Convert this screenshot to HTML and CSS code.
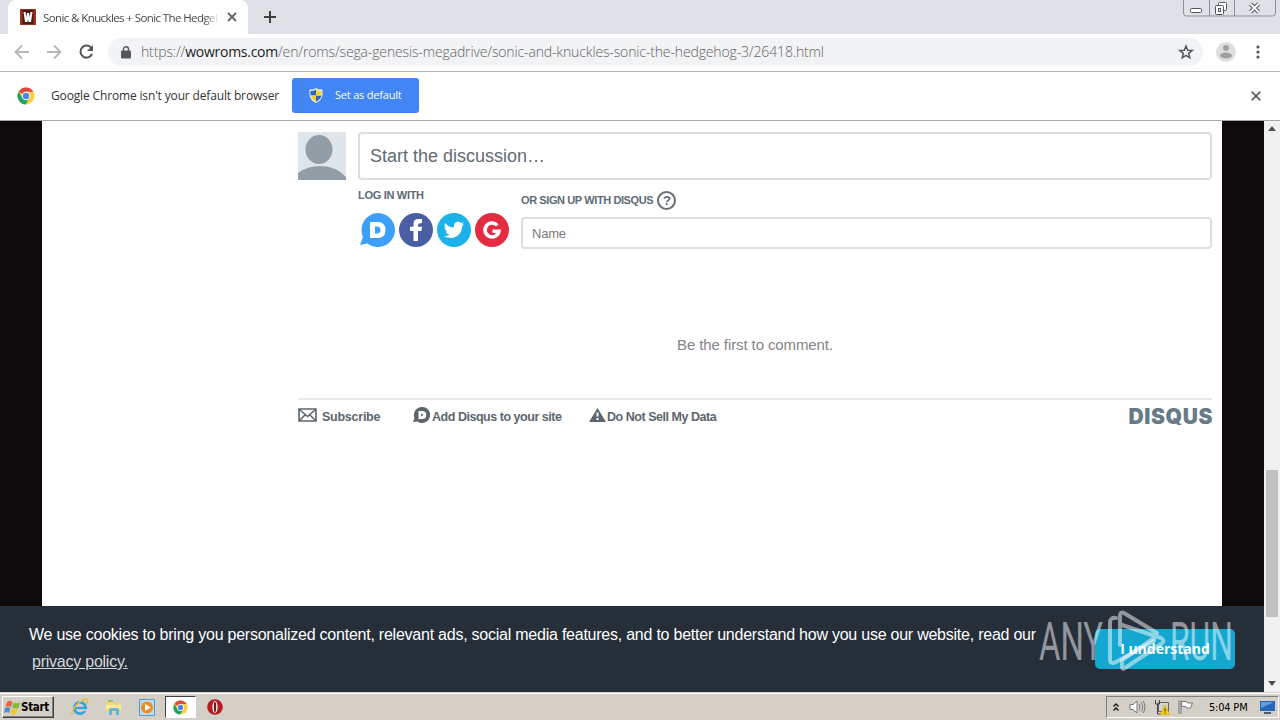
FILE: index.html
```
<!DOCTYPE html>
<html lang="en">
<head>
<meta charset="utf-8">
<title>Sonic &amp; Knuckles + Sonic The Hedgehog 3</title>
<link rel="stylesheet" href="styles.css">
</head>
<body>
<!-- shared symbols -->
<svg class="defs" width="0" height="0">
	<symbol id="chrome" viewBox="0 0 18 18">
		<circle cx="9" cy="9" r="8.5" fill="#fbd03a"/>
		<path d="M9 9L1.6 4.8A8.5 8.5 0 0 1 16.4 4.8L9 4.8Z" fill="#dd4b3e"/>
		<path d="M1.6 4.8A8.5 8.5 0 0 0 8.6 17.5L12.4 11L9 9L5.4 11Z" fill="#1da362"/>
		<circle cx="9" cy="9" r="4.2" fill="#fff"/>
		<circle cx="9" cy="9" r="3.2" fill="#4a86e8"/>
	</symbol>
</svg>

<!-- tabs -->
<div class="tabstrip">
	<div class="tab">
		<svg class="favicon" width="16" height="16" viewBox="0 0 16 16"><path fill="#9c2f1b" d="M0 0h16v16H0z"/><path fill="#4a1a14" d="M2.500 1h11v14h-11z"/><path d="M3.500 3L5 13h2.500L8 10l.5 3H11l1.500-10h-2L9.800 8 9 4H7l-.8 4-.7-5z" fill="#fff"/></svg>
		<span class="tab-title">Sonic &amp; Knuckles + Sonic The Hedgel</span>
		<svg width="10" height="10" viewBox="0 0 10 10"><path d="M1 1l8 8M9 1l-8 8" stroke="#5f6368" stroke-width="1.800"/></svg>
	</div>
	<svg class="newtab" width="12" height="12" viewBox="0 0 12 12"><path d="M6 0v12M0 6h12" stroke="#3c4043" stroke-width="2"/></svg>
	<svg class="winbtns" width="94" height="17" viewBox="0 0 94 17">
		<path d="M.5 0v13q0 3 3 3h86q3 0 3-3V0M26.500 0v16M51.500 0v16" fill="none" stroke="#8b909a"/>
		<g fill="#fff" stroke="#51565f"><rect x="7.500" y="8.500" width="11" height="4" rx="1"/><rect x="35.500" y="2.500" width="8" height="8" rx="1"/><rect x="32.500" y="5.500" width="8" height="9" rx="1"/><rect x="35.500" y="8.500" width="2" height="3"/></g>
		<path d="M67.500 4l8 8M75.500 4l-8 8" stroke="#51565f" stroke-width="4"/><path d="M67.500 4l8 8M75.500 4l-8 8" stroke="#fff" stroke-width="2"/>
	</svg>
</div>

<!-- toolbar -->
<div class="toolbar">
	<svg class="nav" width="82" height="16" viewBox="0 0 82 16" fill="none" stroke-width="1.800">
		<path d="M15 8H2M8 1.500L1.500 8 8 14.500M33 8h13M40 1.500L46.500 8 40 14.500" stroke="#b5b7ba"/>
		<path d="M77.300 4A6 6 0 1 0 78 10" stroke="#54585d" stroke-width="2"/><path d="M79 1v6h-6z" fill="#54585d"/>
	</svg>
	<div class="omnibox">
		<svg width="10" height="13" viewBox="0 0 10 13"><rect y="4.500" width="10" height="8" rx="1" fill="#54585d"/><path d="M2.500 5V3.200a2.500 2.500 0 0 1 5 0V5" fill="none" stroke="#54585d" stroke-width="1.400"/></svg>
		<span class="url">https://<b>wowroms.com</b>/en/roms/sega-genesis-megadrive/sonic-and-knuckles-sonic-the-hedgehog-3/26418.html</span>
		<svg class="star" width="16" height="16" viewBox="0 0 16 16"><path d="M8 2l1.700 4.200 4.500.3-3.500 2.900 1.100 4.400L8 11.400l-3.800 2.400 1.100-4.400-3.500-2.900 4.500-.3z" fill="none" stroke="#54585d" stroke-width="1.500"/></svg>
	</div>
	<svg class="avatar" width="20" height="20" viewBox="0 0 20 20"><circle cx="10" cy="10" r="10" fill="#dedede"/><circle cx="10" cy="6" r="3" fill="#a0a0a0"/><ellipse cx="10" cy="13.500" rx="6" ry="3" fill="#a0a0a0"/></svg>
	<svg class="menu" width="4" height="14" viewBox="0 0 4 14" fill="#54585d"><circle cx="2" cy="2" r="1.600"/><circle cx="2" cy="7" r="1.600"/><circle cx="2" cy="12" r="1.600"/></svg>
</div>

<!-- default browser bar -->
<div class="infobar">
	<svg width="18" height="18"><use href="#chrome"/></svg>
	<span class="info-text">Google Chrome isn't your default browser</span>
	<span class="default-btn">
		<svg width="14" height="15" viewBox="0 0 14 15"><path d="M7 0q3 2 6.500 1.500V7Q13 12 7 15 1 12 .5 7V1.500Q4 2 7 0z" fill="#e7edf3"/><path d="M7 1.500V7.500H1.500V3Q5 3 7 1.500zM7 7.500h5.500Q12 11 7 13.700z" fill="#2c67b4"/><path d="M7 1.500q2 1.500 5.500 1.500v4.500H7zM7 7.500v6.200Q2 11 1.500 7.500z" fill="#f8cf35"/></svg>
		<span>Set as default</span>
	</span>
	<svg class="info-close" width="10" height="10" viewBox="0 0 10 10"><path d="M.7.7l8.600 8.600M9.300.7L.7 9.300" stroke="#5f6368" stroke-width="1.800"/></svg>
</div>

<div class="viewport">
	<div class="page">
		<div class="sheet">
			<div class="reply">
				<svg class="user" width="48" height="48" viewBox="0 0 48 48"><path d="M0 0h48v48H0z" fill="#dfe5e9"/><ellipse cx="21" cy="17.500" rx="13.500" ry="14.500" fill="#929da6"/><path d="M0 48v-7q9-7 22-7 16 0 26 11v3z" fill="#929da6"/></svg>
				<div class="reply-main">
					<div class="textarea"><span>Start the discussion…</span></div>
					<div class="login">
						<div class="services">
							<h6>LOG IN WITH</h6>
							<div class="social">
								<svg width="36" height="34" viewBox="0 0 36 34"><path d="M19 0a17 17 0 1 1-10.500 30.400L1 32l3-8A17 17 0 0 1 19 0z" fill="#3c9ffa"/><path d="M11 9h7.500q8 0 8 8t-8 8H11zm5 4.500v7h2q3.500 0 3.500-3.500T18 13.500z" fill="#fff" fill-rule="evenodd"/></svg>
								<svg width="34" height="34" viewBox="0 0 34 34"><circle cx="17" cy="17" r="17" fill="#4a5fa3"/><path d="M14.500 28V18H11v-4.200h3.500V11q0-5 5-5H23v4.200h-2q-2 0-2 2v1.600h4l-.6 4.200H19v10z" fill="#fff"/></svg>
								<svg width="34" height="34" viewBox="0 0 34 34"><circle cx="17" cy="17" r="17" fill="#1ab2e8"/><path d="M8 10q4 4.500 9 4.500c-.7-6 5-7 7-4.300l2.500-1-1.500 2.500 2-.5-2 2.300C25 21 19 25 14 25q-4 0-7-2 4 0 5.500-1.600-3-.4-4-3l2 0q-3-1.500-3.100-4.400l1.800.6Q6.500 13 8 10z" fill="#fff"/></svg>
								<svg width="34" height="34" viewBox="0 0 34 34"><circle cx="17" cy="17" r="17" fill="#e52b41"/><path d="M22.300 12.400a7 7 0 1 0 1.600 5.800H17.500" fill="none" stroke="#fff" stroke-width="3.600"/></svg>
							</div>
						</div>
						<div class="signup">
							<h6>OR SIGN UP WITH DISQUS <span class="help">?</span></h6>
							<div class="field"><span>Name</span></div>
						</div>
					</div>
				</div>
			</div>
			<p class="empty"><span>Be the first to comment.</span></p>
			<div class="footer">
				<svg width="19" height="14" viewBox="0 0 19 14"><path d="M1 1h17v12H1zM2 2l7.500 6.500L17 2M2 12l5-5M17 12l-5-5" fill="none" stroke="#5c666d" stroke-width="1.600"/></svg>
				<span class="f-sub">Subscribe</span>
				<svg class="f-icon" width="17" height="16" viewBox="0 0 17 16"><path d="M9 0a8 8 0 1 1-4.500 14.500L0 15l1.500-4A8 8 0 0 1 9 0z" fill="#5c666d"/><path d="M5.500 4H9q4.300 0 4.300 4T9 12H5.500zm2.500 2.500v3l2.500-1.500z" fill="#fff" fill-rule="evenodd"/></svg>
				<span class="f-add">Add Disqus to your site</span>
				<svg class="f-warn" width="17" height="14" viewBox="0 0 17 14"><path d="M8.500 0L17 14H0z" fill="#5c666d"/><path d="M7.500 4.500h2v4h-2zM7.500 10h2v2h-2z" fill="#fff"/></svg>
				<span class="f-sell">Do Not Sell My Data</span>
				<strong class="brand">DISQUS</strong>
			</div>
		</div>
		<div class="cookies">
			<p><span class="c-text">We use cookies to bring you personalized content, relevant ads, social media features, and to better understand how you use our website, read our</span><br><a>privacy policy.</a></p>
			<span class="accept">I understand</span>
		</div>
	</div>
	<div class="scrollbar">
		<svg width="8" height="5" viewBox="0 0 8 5"><path d="M4 0l4 5H0z" fill="#505050"/></svg>
		<div class="thumb"></div>
		<svg width="8" height="5" viewBox="0 0 8 5"><path d="M4 5l4-5H0z" fill="#505050"/></svg>
	</div>
</div>

<div class="taskbar">
	<div class="start">
		<svg width="17" height="15" viewBox="0 0 17 15"><path d="M3 2q3-2 5.500 0L7 7Q4.500 5.500 1.500 7z" fill="#e8643c"/><path d="M9.500 2.500Q12 4 16 2.500L14.500 8Q11 9 8 7.500z" fill="#7fba41"/><path d="M1 8q3-1.500 5.500 0L5 13q-2.500-1.500-5 0z" fill="#4b8fd6"/><path d="M7.500 8.500q3 1.500 6.500.5L12.500 14Q9 15 6 13.500z" fill="#f5c52f"/></svg>
		<b>Start</b>
	</div>
	<svg class="ie" width="18" height="18" viewBox="0 0 18 18"><circle cx="9" cy="10" r="5.700" fill="none" stroke="#35a3df" stroke-width="2.800"/><path d="M4 10h11" stroke="#35a3df" stroke-width="2.200"/><path d="M11.500 11.400h5v1.800h-5z" fill="#d4d0c8"/><path d="M2 15Q-1 17 3 10 9 2 15 1q4 0 0 5" fill="none" stroke="#e9bd3d" stroke-width="1.400"/></svg>
	<svg class="folder" width="17" height="16" viewBox="0 0 17 16"><path d="M1 2h6l1 2h8v9H1z" fill="#f3d872"/><path d="M3 1h5v2H3z" fill="#8dc16a"/><path d="M1 6h15v4H1z" fill="#f9eaa2"/><path d="M4 16v-5q0-2 2-2h6q2 0 2 2v5h-3v-4H7v4z" fill="#67b4df"/></svg>
	<svg class="media" width="16" height="17" viewBox="0 0 16 17"><path d="M.5.5h15v16H.5z" fill="#b9ddf5" stroke="#5599d2"/><circle cx="8" cy="8.500" r="6" fill="#f28c1d"/><path d="M6 5l6 3.500L6 12z" fill="#fff"/></svg>
	<div class="running"><svg width="15" height="15"><use href="#chrome"/></svg></div>
	<svg class="opera" width="16" height="16" viewBox="0 0 16 16"><circle cx="8" cy="8" r="7.800" fill="#b51b20"/><ellipse cx="8" cy="8" rx="2.600" ry="6" fill="#fff"/><ellipse cx="8" cy="8" rx="1.200" ry="5.300" fill="#7b1518"/></svg>
	<div class="tray">
		<svg width="6" height="9" viewBox="0 0 6 9" fill="none" stroke="#111" stroke-width="1.300"><path d="M.5 3.500L3 1l2.500 2.500M.5 7.500L3 5l2.500 2.500"/></svg>
		<svg class="t-vol" width="17" height="14" viewBox="0 0 17 14" stroke="#777"><path d="M1 4.500h3L8 1v12L4 9.500H1z" fill="#fff"/><path d="M10 4q2 3 0 6M12 2.500q3.500 4.500 0 9M14 1q4 6 0 12" fill="none"/></svg>
		<svg class="t-net" width="16" height="15" viewBox="0 0 16 15"><path d="M4.500 2.500h10v9h-10z" fill="#d4d4ce" stroke="#666"/><path d="M1.500 0v4h4V0M3.500 4v10h4" fill="none" stroke="#444"/><path d="M11 5l5 10H6z" fill="#f5cf19" stroke="#c79b14" stroke-width=".6"/><path d="M11 8.500v3M11 12.500v1.200" stroke="#222"/></svg>
		<svg class="t-flag" width="16" height="14" viewBox="0 0 16 14"><path d="M1 .5v13.500M3 .5v13.500" stroke="#777"/><path d="M3.500 1.500h5l1 1.500h5l-2 5H9l-1-1.500H3.500z" fill="#fff" stroke="#777"/></svg>
		<span class="clock">5:04 PM</span>
		<svg width="15" height="13" viewBox="0 0 15 13"><path d="M0 0h15v10H0z" fill="#2567b8"/><path d="M1 1h13L1 7z" fill="#5d9fe0"/><path d="M4 11h7v2H4z" fill="#4c5966"/></svg>
	</div>
</div>

<!-- watermark lies over the page -->
<svg class="watermark" width="210" height="70" viewBox="0 0 210 70">
	<g class="wm-text"><text x="3" y="51.500" textLength="64" lengthAdjust="spacingAndGlyphs">ANY</text><text x="134" y="51.500" textLength="63" lengthAdjust="spacingAndGlyphs">RUN</text></g>
	<g fill="none" stroke="#fff" stroke-opacity=".5" stroke-width="4" stroke-linejoin="round" stroke-linecap="round">
		<path d="M80 10q-6-1-6 5v36q0 6 6 3l38-21"/><path d="M84 37V8q0-5 4-3l33 20M121 28L86 52v7q0 3 3 1l36-24q5-3 0-6L86 17"/>
	</g>
</svg>
</body>
</html>
```
FILE: styles.css
```
/* base */
html,body{margin:0;padding:0;height:100%;}
body{display:flex;flex-direction:column;overflow:hidden;position:relative;background:#fff;font-family:"Liberation Sans",Arial,sans-serif;}
p,h6{margin:0;padding:0;}
svg{display:block;flex:none;}
span,b,strong{white-space:nowrap;}
.defs{position:absolute;}

/* browser */
.tabstrip{display:flex;flex:none;height:34px;background:#dee1e6;padding-left:8px;align-items:center;font-family:"Open Sans",sans-serif;}
.tab{display:flex;align-items:center;box-sizing:border-box;width:240px;height:34px;padding-left:12px;background:#fff;border-radius:8px 8px 0 0;}
.tab-title{width:176px;margin:0 8px 0 7px;overflow:hidden;font-size:11.5px;letter-spacing:-.6px;color:#45494d;-webkit-mask-image:linear-gradient(to right,#000 92%,transparent);mask-image:linear-gradient(to right,#000 92%,transparent);}
.newtab{margin-left:16px;}
.winbtns{align-self:flex-start;margin:0 3px 0 auto;}
.toolbar{display:flex;flex:none;align-items:center;box-sizing:border-box;height:38px;padding:0 0 1px 14px;border-bottom:1px solid #b6b4b6;font-family:"Open Sans",sans-serif;}
.omnibox{display:flex;align-items:center;box-sizing:border-box;width:1095px;height:28px;margin-left:12px;padding:0 9px 0 13px;border-radius:14px;background:#f1f3f4;}
.url{flex:1;margin:-2px 0 0 10px;font-size:14px;font-weight:300;letter-spacing:-.14px;color:#5f6368;}
.url b{font-weight:400;letter-spacing:-.27px;color:#202124;}
.avatar{margin-left:13px;}
.menu{margin-left:20px;}
.infobar{display:flex;flex:none;align-items:center;box-sizing:border-box;height:49px;padding:0 0 1px 17px;border-bottom:1px solid #a8a8a8;font-family:"Open Sans",sans-serif;}
.info-text{width:228px;margin:0 13px 0 16px;font-size:12px;letter-spacing:-.15px;color:#333;}
.default-btn{display:flex;align-items:center;box-sizing:border-box;width:127px;height:35px;padding-left:17px;border-radius:3px;background:#4285f4;color:#fff;font-size:11px;letter-spacing:-.2px;}
.default-btn span{margin:-2px 0 0 12px;}
.info-close{margin:0 19px 0 auto;}

/* page */
.viewport{display:flex;flex:1;min-height:0;}
.page{display:flex;flex-direction:column;width:1264px;background:#0e0a0b;}
.sheet{flex:1;margin:0 42px;padding:11px 10px 0 256px;background:#fff;color:#656c7a;}
.reply{display:flex;gap:12px;}
.reply-main{flex:1;}
.textarea{display:flex;align-items:center;box-sizing:border-box;height:48px;padding-left:10px;border:2px solid #dbdfe0;border-radius:4px;font-size:18px;color:#5f6b73;}
.login{display:flex;gap:12px;}
.services{width:151px;}
h6{font-size:11px;font-weight:bold;letter-spacing:-.4px;color:#5c6b76;}
.services h6{margin-top:8px;line-height:14px;letter-spacing:-.3px;}
.social{display:flex;gap:4px;margin:11px 0 0 1px;}
.signup{flex:1;}
.signup h6{display:flex;align-items:center;height:20px;margin-top:10px;}
.help{box-sizing:border-box;width:19px;height:19px;margin-left:4px;border:2px solid #656f78;border-radius:50%;font-size:13px;line-height:15px;text-align:center;}
.field{display:flex;align-items:center;box-sizing:border-box;height:32px;margin-top:7px;padding-left:9px;border:2px solid #dbdfe0;border-radius:4px;font-size:13px;letter-spacing:-.2px;color:#7a7a7a;}
.empty{height:62px;margin-top:87px;font-size:15px;line-height:18px;letter-spacing:-.1px;text-align:center;color:#7f8588;}
.footer{display:flex;align-items:center;box-sizing:border-box;height:32px;border-top:2px solid #e7e9ee;font-size:12.500px;font-weight:bold;letter-spacing:-.47px;color:#5c666d;}
.footer span{margin-top:3px;}
.footer .f-sub{width:91px;margin-left:5px;letter-spacing:-.25px;}
.footer .f-add{width:157px;margin-left:2px;}
.footer .f-sell{margin-left:1px;}
.brand{margin:3px -1px 0 auto;font-family:Inter,sans-serif;font-weight:900;font-size:21px;line-height:22px;letter-spacing:.6px;color:#687a86;}
.cookies{display:flex;flex:none;align-items:center;height:86px;background:#252e39;color:#fff;font-size:16px;line-height:27px;}
.cookies p{width:1066px;padding:0 0 2px 29px;letter-spacing:-.237px;}
.cookies a{margin-left:3px;color:#d4d7da;text-decoration:underline;}
.accept{width:140px;height:40px;border-radius:5px;background:#14a7d0;font:bold 14px/40px "Open Sans",sans-serif;text-align:center;}
.scrollbar{display:flex;flex-direction:column;align-items:center;box-sizing:border-box;width:16px;padding:5px 0 6px;background:#f1f1f1;}
.thumb{width:12px;height:147px;margin:339px 0 auto;background:#c1c1c1;}

/* taskbar */
.taskbar{display:flex;flex:none;align-items:center;box-sizing:border-box;height:28px;border-top:1px solid #d4d0c8;box-shadow:inset 0 1px #fff;padding:1px 1px 0 2px;background:#d4d0c8;}
.start{display:flex;align-items:center;box-sizing:border-box;width:52px;height:22px;padding-left:1px;border:1px solid;border-color:#fff #404040 #404040 #fff;box-shadow:inset -1px -1px #808080;font:11.500px "DejaVu Sans Condensed","DejaVu Sans",sans-serif;}
.start b{letter-spacing:-.3px;}
.ie{margin-left:17px;}
.folder{margin-left:16px;}
.media{margin-left:17px;}
.running{display:flex;align-items:center;justify-content:center;box-sizing:border-box;width:31px;height:22px;margin-left:10px;border:1px solid;border-color:#404040 #fff #fff #404040;background:#fff;}
.opera{margin-left:11px;}
.tray{display:flex;align-items:center;box-sizing:border-box;width:173px;height:22px;margin-left:auto;padding-left:6px;border:1px solid;border-color:#808080 #fff #fff #808080;}
.t-vol{margin-left:10px;}
.t-net{margin-left:8px;}
.t-flag{margin-left:8px;}
.clock{width:39px;margin:0 12px 0 15px;font:11px "DejaVu Sans Condensed",sans-serif;letter-spacing:-.2px;}

.watermark{position:absolute;left:1036px;top:608px;}
.wm-text{fill:#fff;fill-opacity:.5;font-family:Roboto,sans-serif;font-size:53px;font-weight:400;}
```
